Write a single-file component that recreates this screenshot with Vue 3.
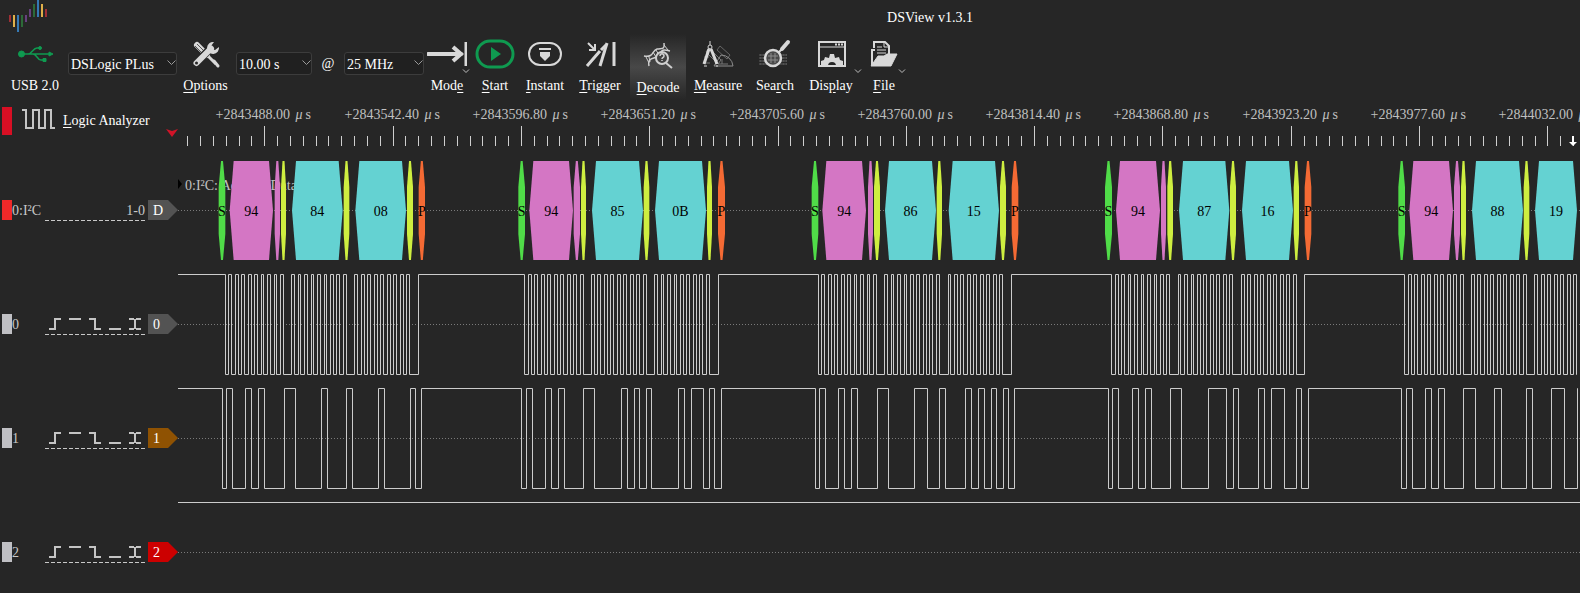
<script setup>
import { reactive } from 'vue'

const settings = reactive({
  device: 'DSLogic PLus',
  duration: '10.00 s',
  rate: '25 MHz'
})

const tools = [
  { id: 'mode', before: 'Mod', key: 'e', after: '', menu: true },
  { id: 'start', before: '', key: 'S', after: 'tart' },
  { id: 'instant', before: '', key: 'I', after: 'nstant' },
  { id: 'trigger', before: '', key: 'T', after: 'rigger' },
  { id: 'decode', before: '', key: 'D', after: 'ecode' },
  { id: 'measure', before: '', key: 'M', after: 'easure' },
  { id: 'search', before: 'Sea', key: 'r', after: 'ch' },
  { id: 'display', before: 'Dis', key: 'p', after: 'lay', menu: true },
  { id: 'file', before: '', key: 'F', after: 'ile', menu: true }
]

// Ruler: one major division is 54.40 µs and spans ten minor ticks.
const DIVISION = 128.31
const FIRST_MAJOR = 86.8
const majors = Array.from({ length: 11 }, (_, i) => ({
  x: Math.floor(FIRST_MAJOR + i * DIVISION) + 0.5,
  value: '+' + (2843488 + i * 54.4).toFixed(2)
}))
const minors = Array.from({ length: 109 }, (_, i) => i - 6)
  .filter((i) => i % 10 !== 0)
  .map((i) => Math.floor(FIRST_MAJOR + (i * DIVISION) / 10) + 0.5)

// Captured I²C packets. Edge times are in ticks, three to a pixel, counted from the packet's origin.
const packets = [
  {
    origin: 32,
    scl: [46, 55, 64, 76, 85, 94, 103, 115, 124, 133, 142, 154, 160, 172, 181, 193, 199, 211, 220, 244, 253, 265, 271, 283, 292, 304, 310, 322, 331, 343, 349, 361, 370, 379, 388, 400, 409, 433, 442, 454, 463, 472, 481, 493, 502, 511, 520, 532, 541, 550, 559, 571, 580, 589, 598, 625],
    sda: [37, 49, 67, 106, 124, 145, 163, 223, 256, 334, 352, 409, 427, 505, 523, 601, 616, 634],
    spans: [26, 46, 59, 189, 194, 210, 213, 228, 246, 398, 401, 418, 436, 588, 591, 609, 626, 645],
    bytes: ['94', '84', '08']
  },
  {
    origin: 322,
    scl: [73, 85, 94, 103, 112, 124, 133, 142, 151, 163, 172, 181, 190, 202, 211, 220, 229, 241, 250, 274, 283, 292, 301, 313, 322, 331, 340, 352, 361, 370, 379, 391, 400, 409, 418, 430, 439, 463, 472, 484, 490, 502, 511, 523, 529, 541, 550, 559, 568, 580, 589, 598, 607, 619, 628, 655],
    sda: [64, 79, 97, 136, 154, 175, 193, 250, 283, 364, 382, 403, 418, 439, 454, 535, 553, 574, 610, 628, 643, 664],
    spans: [55, 75, 88, 219, 221, 240, 243, 258, 276, 429, 431, 448, 465, 618, 621, 636, 654, 675],
    bytes: ['94', '85', '0B']
  },
  {
    origin: 612,
    scl: [85, 94, 103, 115, 124, 133, 142, 154, 163, 172, 181, 193, 199, 211, 220, 232, 238, 250, 259, 283, 292, 304, 310, 322, 331, 343, 349, 361, 370, 379, 388, 400, 409, 418, 427, 439, 448, 475, 481, 493, 502, 511, 520, 532, 541, 550, 559, 571, 580, 589, 598, 610, 619, 628, 637, 664],
    sda: [76, 88, 106, 145, 163, 184, 202, 262, 295, 373, 412, 448, 466, 526, 544, 565, 583, 604, 619, 640, 655, 673],
    spans: [65, 85, 97, 228, 234, 249, 252, 270, 285, 438, 440, 456, 476, 627, 630, 648, 665, 685],
    bytes: ['94', '86', '15']
  },
  {
    origin: 912,
    scl: [64, 76, 85, 94, 103, 115, 121, 133, 142, 154, 160, 172, 181, 193, 199, 211, 220, 229, 238, 265, 271, 283, 292, 304, 310, 322, 331, 340, 349, 361, 370, 379, 388, 400, 409, 418, 427, 454, 463, 472, 481, 493, 502, 511, 520, 532, 541, 550, 559, 571, 580, 589, 598, 610, 619, 643],
    sda: [55, 67, 85, 127, 145, 166, 184, 241, 274, 355, 409, 430, 445, 505, 523, 544, 583, 619, 634, 655],
    spans: [45, 66, 78, 210, 213, 228, 232, 249, 267, 418, 420, 438, 456, 609, 611, 627, 644, 664],
    bytes: ['94', '87', '16']
  },
  {
    origin: 1202,
    scl: [73, 85, 94, 103, 112, 124, 133, 142, 151, 163, 172, 181, 190, 202, 211, 220, 229, 241, 250, 274, 283, 292, 301, 313, 322, 331, 340, 352, 361, 370, 379, 391, 400, 409, 418, 430, 439, 463, 472, 484, 493, 502, 511, 523, 532, 541, 550, 562, 571, 580, 589],
    sda: [64, 79, 97, 136, 154, 175, 193, 250, 286, 343, 364, 439, 457, 514, 553, 592],
    spans: [55, 75, 88, 219, 222, 240, 243, 258, 276, 429, 431, 448, 465, 591],
    bytes: ['94', '88', '19']
  }
]

const END = 1399
const kinds = ['start', 'addr', 'addr', 'ack', 'data', 'ack', 'data', 'ack', 'stop']

function wave(line) {
  let d = 'M0 7.5'
  let high = true
  for (const p of packets) {
    for (const t of p[line]) {
      const x = p.origin + Math.floor(t / 3) + 0.5
      high = !high
      d += `H${x}V${high ? 7.5 : 107.5}`
    }
  }
  return d + `H${END}`
}

// Wide spans taper from the centre line; narrow ones keep their full width until near the ends.
function outline(a, b) {
  if (b - a > 8) {
    return `${a},57.5 ${a + 4},8 ${b - 4},8 ${b},57.5 ${b - 4},107 ${a + 4},107`
  }
  const cut = (b - a) / 2 - 1
  return `${a},34 ${a + cut},8 ${b - cut},8 ${b},34 ${b},81 ${b - cut},107 ${a + cut},107 ${a},81`
}

const annotations = packets.flatMap((p) => {
  const labels = ['S', p.bytes[0], '', '', p.bytes[1], '', p.bytes[2], '', 'P']
  const out = []
  for (let i = 0; i * 2 < p.spans.length; i++) {
    const a = p.origin + p.spans[i * 2] / 3
    const b = p.origin + p.spans[i * 2 + 1] / 3
    out.push({ kind: kinds[i], label: labels[i], x: (a + b) / 2, points: outline(a, b) })
  }
  return out
})

const channels = [
  { id: '0', tag: 'gray', path: wave('scl') },
  { id: '1', tag: 'brown', path: wave('sda') },
  { id: '2', tag: 'red', path: '' }
]

const triggers = [
  { name: 'Rising edge', d: 'M4 15h6V5h6' },
  { name: 'High level', d: 'M4 5h12' },
  { name: 'Falling edge', d: 'M4 5h6v10h6' },
  { name: 'Low level', d: 'M4 15h12' },
  { name: 'Either edge', d: 'M4 5h5M11 5h5M4 15h5M11 15h5M10 5v10' }
]
</script>

<template>
  <div class="app">
    <header class="titlebar">
      <svg class="logo" width="40" height="33" viewBox="0 0 40 33" aria-hidden="true">
        <path d="M2 15v7M38 9v8" stroke="#9f2f35" stroke-width="2" />
        <path d="M6 15v12M34 4v13" stroke="#e0b04a" stroke-width="2" />
        <path d="M10 15v17M30 0v17" stroke="#3579b4" stroke-width="2" />
        <path d="M14 15v12M26 4v13" stroke="#2c6a38" stroke-width="2" />
        <path d="M18 15v7M22 9v8" stroke="#67407f" stroke-width="2" />
      </svg>
      <h1>DSView v1.3.1</h1>
    </header>

    <nav class="toolbar">
      <button class="tool usb">
        <svg width="40" height="32" viewBox="0 0 40 32">
          <g fill="#0f9a50" stroke="#0f9a50">
            <circle cx="6.500" cy="16" r="3" />
            <path d="M8 16h28M13 16c4 0 5-6 9-6h4M18 16c4 0 4 6 8 6h3" fill="none" stroke-width="1.500" />
            <path d="M34 14l4 2-4 2z" />
            <circle cx="25" cy="10" r="1.500" />
            <path d="M28 20.500h3v3h-3z" />
          </g>
        </svg>
        <span>USB 2.0</span>
      </button>

      <div class="combo device">
        <select v-model="settings.device" aria-label="Device"><option>DSLogic PLus</option></select>
        <svg width="9" height="6" viewBox="0 0 9 6"><path d="M.5 .5l4 4 4-4" /></svg>
      </div>

      <button class="tool options">
        <svg width="40" height="32" viewBox="0 0 40 32">
          <path d="M11 7L21 17" stroke="#d8d8d8" stroke-width="6" stroke-linecap="round" />
          <path d="M11 6l8 8M9 8l8 8" stroke="#555" stroke-width="1" />
          <path d="M20 16l10 10" stroke="#d8d8d8" stroke-width="3" />
          <path d="M28 23l4 5" stroke="#d8d8d8" stroke-width="3" stroke-linecap="round" />
          <path d="M10 25L26 9" stroke="#262626" stroke-width="8" />
          <path d="M10.500 25L25 10.500" stroke="#d8d8d8" stroke-width="6" stroke-linecap="round" />
          <path d="M28 4a6 6 0 1 0 5 5l-4 3-3-1-1-3z" fill="#d8d8d8" />
          <circle cx="10.500" cy="25" r="1.500" fill="#262626" />
        </svg>
        <span><u>O</u>ptions</span>
      </button>

      <div class="combo duration">
        <select v-model="settings.duration" aria-label="Sample duration"><option>10.00 s</option></select>
        <svg width="9" height="6" viewBox="0 0 9 6"><path d="M.5 .5l4 4 4-4" /></svg>
      </div>
      <span class="at">@</span>
      <div class="combo rate">
        <select v-model="settings.rate" aria-label="Sample rate"><option>25 MHz</option></select>
        <svg width="9" height="6" viewBox="0 0 9 6"><path d="M.5 .5l4 4 4-4" /></svg>
      </div>

      <button v-for="t in tools" :key="t.id" class="tool" :class="t.id">
        <svg width="40" height="32" viewBox="0 0 40 32" fill="none" stroke="#d8d8d8">
          <g v-if="t.id === 'mode'" stroke-width="4">
            <path d="M1 16h33" stroke-linecap="round" />
            <path d="M26 9l8 7-8 7" stroke-width="4" />
            <path d="M39 4v24" stroke-width="3" />
          </g>
          <g v-else-if="t.id === 'start'" stroke="#0f9a50">
            <rect x="2" y="3" width="36" height="26" rx="13" stroke-width="3" />
            <path d="M16 9l10 7-10 7z" fill="#0f9a50" stroke="none" />
          </g>
          <g v-else-if="t.id === 'instant'" stroke-width="2">
            <rect x="4" y="5" width="32" height="22" rx="11" />
            <path d="M14 11h12" />
            <path d="M15 14h10v4l-5 5-5-5z" fill="#d8d8d8" stroke="none" />
          </g>
          <g v-else-if="t.id === 'trigger'" stroke-width="3">
            <path d="M7 28L20 13M21 12l5-5" />
            <path d="M20 28l7-23" />
            <path d="M34 4v24" />
            <path d="M8 5l6 6M15 6v6H9" stroke-width="2" />
          </g>
          <g v-else-if="t.id === 'decode'" stroke="#cfcfcf" stroke-width="1.500">
            <path d="M6 18C16 20 14 12 19 11S27 12 26 5M11 28C9 18 18 22 21 17S24 11 32 13" />
            <path d="M8 19l3 6M11 19l1 5M15 14l3 5M18 12l3 5M26 7l4 5" stroke-width="1" />
            <circle cx="24" cy="20" r="6" fill="#404040" stroke-width="2" />
            <path d="M22 18c0-3 4-3 4 0 0 2-2 1-2 3M24 22v1" />
            <path d="M28 25l6 5" stroke-width="2" />
          </g>
          <g v-else-if="t.id === 'measure'">
            <path d="M8 14l3-4 12 12-3 4z" stroke="#777" />
            <path d="M19 12l3-4 10 9-3 4z" stroke="#666" />
            <path d="M16 28L35 28a12 12 0 0 0-12-11z" stroke="#8c8c8c" />
            <path d="M20 26h10M24 21v5M5 25h7M6 19h5" stroke="#777" />
            <path d="M12 3v4" />
            <circle cx="12" cy="9" r="2" />
            <path d="M11 11L6 26M13 11l6 15" stroke-width="3" />
            <path d="M6 28h3M18 28h2" />
          </g>
          <g v-else-if="t.id === 'search'">
            <path d="M4 17h28M4 20h28M4 23h28M4 26h28M6 16v11M9 16v11M28 16v11M31 16v11" stroke="#5f5f5f" stroke-width="1" stroke-dasharray="2 1" />
            <circle cx="18" cy="20" r="8" stroke-width="2.500" fill="#4a4a4a" />
            <path d="M13 18h10M13 22h10M16 15v10M20 15v10" stroke="#8c8c8c" />
            <path d="M24 14l4-4" stroke-width="2" />
            <path d="M27 11l6-7" stroke-width="4" stroke-linecap="round" />
          </g>
          <g v-else-if="t.id === 'display'">
            <rect x="8" y="4" width="26" height="24" stroke-width="2" />
            <path d="M8 9h26" />
            <path d="M24 6.500h2M27 6.500h2M30 6.500h2" stroke-width="2" />
            <path d="M10 28v-5l3-1 1-3 4 1 1-4h4l1 4 4-1 1 3 3 1v5h-7a4 4 0 0 0-8 0z" fill="#d8d8d8" stroke="none" />
          </g>
          <g v-else>
            <path d="M8 27V12h3M10 10V4h11l4 4v8" stroke-width="2" />
            <path d="M20 4v5h5M13 9h5M13 12h9M13 15h9" />
            <path d="M14 18h6l3-2h10l-6 12H7z" fill="#d8d8d8" />
          </g>
        </svg>
        <span>{{ t.before }}<u>{{ t.key }}</u>{{ t.after }}</span>
        <svg v-if="t.menu" class="caret" width="8" height="5" viewBox="0 0 8 5"><path d="M1 .5l3 3 3-3" /></svg>
      </button>
    </nav>

    <main class="scope">
      <section class="row head">
        <div class="side">
          <i class="flag"></i>
          <svg class="square" width="34" height="22" viewBox="0 0 34 22" aria-hidden="true">
            <path d="M0 2h4v18h7V2h6v18h6V2h6v18h4" />
          </svg>
          <span><u>L</u>ogic Analyzer</span>
          <svg class="cursor" width="12" height="8" viewBox="0 0 12 8"><path d="M0 0l6 2 6-2-6 8z" /></svg>
        </div>
        <svg class="plot">
          <g class="ticks">
            <path v-for="x in minors" :key="x" :d="`M${x} 29V39`" />
            <path v-for="m in majors" :key="m.x" :d="`M${m.x} 19V39`" />
          </g>
          <g class="times">
            <text v-for="m in majors" :key="m.x" :x="m.x - 49" y="12">{{ m.value }} <tspan class="mu" dx="2">μ</tspan><tspan dx="3">s</tspan></text>
          </g>
          <path d="M1391 35h8l-4 4zM1394 29h2v6h-2z" fill="#fff" />
        </svg>
      </section>

      <section class="row">
        <div class="side">
          <i class="swatch decoder"></i>
          <span class="name">0:I²C</span>
          <span class="range">1-0</span>
          <span class="tag gray">D</span>
        </div>
        <svg class="plot">
          <line class="base" x1="0" x2="100%" y1="57.500" y2="57.500" />
          <path d="M0 26v10l4-5z" fill="#000" />
          <text class="title" x="7" y="37">0:I²C: Address/Data</text>
          <g v-for="a in annotations" :key="a.x">
            <polygon :class="a.kind" :points="a.points" />
            <text class="byte" :x="a.x" y="63">{{ a.label }}</text>
          </g>
        </svg>
      </section>

      <section v-for="c in channels" :key="c.id" class="row">
        <div class="side">
          <i class="swatch"></i>
          <span class="name">{{ c.id }}</span>
          <span class="triggers">
            <button v-for="t in triggers" :key="t.name" :aria-label="t.name">
              <svg width="20" height="20" viewBox="0 0 20 20"><path :d="t.d" /></svg>
            </button>
          </span>
          <span class="tag" :class="c.tag">{{ c.id }}</span>
        </div>
        <svg class="plot">
          <line class="base" x1="0" x2="100%" y1="57.500" y2="57.500" />
          <path v-if="c.path" class="wave" :d="c.path" />
          <line v-else class="wave" x1="0" x2="100%" y1="7.500" y2="7.500" />
        </svg>
      </section>
    </main>
  </div>
</template>

<style>
body {
  margin: 0;
  background: #262626;
}
</style>

<style scoped>
.app {
  display: flex;
  flex-direction: column;
  height: 100vh;
  overflow: hidden;
  background: #262626;
  color: #fff;
  font: 14px/16px "Liberation Serif", "Noto Sans CJK TC", serif;
}
button {
  padding: 0;
  border: 0;
  background: none;
  color: inherit;
  font: inherit;
}
u {
  text-underline-offset: 2px;
}
.titlebar {
  display: flex;
  align-items: center;
  height: 34px;
  flex: none;
}
.logo {
  margin-left: 8px;
  align-self: flex-start;
}
h1 {
  flex: 1;
  margin: 0;
  padding: 2px 0 0 232px;
  text-align: center;
  font-size: 14px;
  font-weight: 400;
}
.toolbar {
  display: flex;
  height: 73px;
  flex: none;
  padding-left: 5px;
  align-items: flex-start;
}
.tool {
  position: relative;
  display: flex;
  flex: none;
  flex-direction: column;
  align-items: center;
  gap: 8px;
  padding: 4px 0;
}
.tool > svg {
  display: block;
}
.usb { width: 60px; margin-right: 3px; }
.options { width: 59px; padding-right: 2px; box-sizing: border-box; }
.mode { width: 46px; }
.start, .instant, .search { width: 50px; }
.trigger { width: 60px; }
.decode {
  width: 56px;
  gap: 10px;
  background: linear-gradient(#262626, #484848 50%, #262626);
}
.measure { width: 64px; }
.display { width: 62px; }
.file { width: 44px; }
.tool > .caret {
  position: absolute;
  right: 0;
  top: 35px;
  fill: none;
  stroke: #bdbdbd;
}
.combo {
  position: relative;
  flex: none;
  height: 23px;
  margin-top: 18px;
}
.device { width: 109px; }
.duration { width: 76px; }
.rate { width: 80px; }
.combo select {
  box-sizing: border-box;
  width: 100%;
  height: 100%;
  padding: 2px 2px 0;
  appearance: none;
  border: 1px solid #3c3c3c;
  border-radius: 3px;
  background: #202020;
  color: #fff;
  font: inherit;
}
.combo svg {
  position: absolute;
  right: 1px;
  top: 8px;
  fill: none;
  stroke: #9a9a9a;
  pointer-events: none;
}
.at {
  width: 32px;
  margin-top: 22px;
  text-align: center;
}
.scope {
  flex: 1;
  min-height: 0;
}
.row {
  display: flex;
  height: 114px;
}
.row.head {
  height: 46px;
}
.side {
  position: relative;
  display: flex;
  width: 176px;
  flex: none;
  align-items: center;
  padding-left: 2px;
  color: #c8c8c8;
}
.head .side {
  align-items: flex-start;
  color: #fff;
}
.head .side span {
  margin: 6px 0 0 7px;
}
.flag {
  width: 10px;
  height: 28px;
  background: #d80f24;
}
.square {
  margin: 1px 0 0 10px;
  fill: none;
  stroke: #c4c4c4;
  stroke-width: 2;
}
.cursor {
  position: absolute;
  right: 0;
  top: 22px;
  fill: #d01428;
}
.swatch {
  width: 10px;
  height: 20px;
  background: #c0c0c4;
}
.swatch.decoder {
  background: #ef2929;
}
.name {
  width: 33px;
  padding-top: 2px;
}
.range,
.triggers {
  display: flex;
  width: 100px;
  height: 20px;
  margin-right: 3px;
  padding: 1px 0;
  background: repeating-linear-gradient(90deg, #c8c8c8 0 4px, transparent 4px 6px) bottom / 100% 1px no-repeat;
}
.range {
  justify-content: flex-end;
  line-height: 22px;
}
.triggers button {
  width: 20px;
  height: 20px;
}
.triggers svg {
  display: block;
  fill: none;
  stroke: #c4c4c4;
  stroke-width: 2;
}
.tag {
  box-sizing: border-box;
  width: 30px;
  height: 20px;
  padding-left: 5px;
  color: #fff;
  line-height: 22px;
  clip-path: polygon(0 0, 20px 0, 100% 50%, 20px 100%, 0 100%);
}
.gray { background: #535353; }
.brown { background: #8f5202; }
.red { background: #cc0000; }
.plot {
  flex: 1;
  min-width: 0;
  height: 100%;
}
.ticks {
  stroke: #cfcfcf;
}
.times,
.title {
  fill: #c0c0c0;
}
.mu {
  font-style: italic;
}
.base {
  stroke: #7a7a7a;
  stroke-dasharray: 1 2;
}
.wave {
  fill: none;
  stroke: #cccccc;
}
.byte {
  fill: #000;
  text-anchor: middle;
}
.plot .start { fill: #50dc48; }
.plot .addr { fill: #d476c4; }
.plot .ack { fill: #ceee40; }
.plot .data { fill: #64d2d2; }
.plot .stop { fill: #f46a34; }
</style>
